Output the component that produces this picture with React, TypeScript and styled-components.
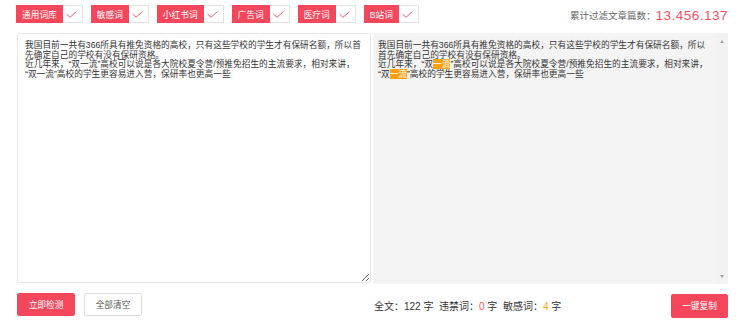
import React from "react";
import styled, { createGlobalStyle } from "styled-components";

const RED = "#f4475c";
const FONT = `"Liberation Sans", "Noto Sans CJK SC", sans-serif`;

const tags = ["通用词库", "敏感词", "小红书词", "广告词", "医疗词", "B站词"];

const sourceText =
  "我国目前一共有366所具有推免资格的高校，只有这些学校的学生才有保研名额，所以首先确定自己的学校有没有保研资格。\n" +
  "近几年来，“双一流”高校可以说是各大院校夏令营/预推免招生的主流要求，相对来讲，\n" +
  "“双一流”高校的学生更容易进入营，保研率也更高一些";

const App: React.FC = () => {
  return (
    <>
      <GlobalStyle />
      <Page>
        <TopBar>
          <TagList>
            {tags.map((t) => (
              <TagGroup key={t}>
                <TagLabel>{t}</TagLabel>
                <CheckBox>
                  <svg width="11" height="7" viewBox="0 0 11 7">
                    <polyline
                      points="0.5,3 4,6.3 10.5,0.5"
                      fill="none"
                      stroke="#f05a6b"
                      strokeWidth="1"
                    />
                  </svg>
                </CheckBox>
              </TagGroup>
            ))}
          </TagList>
          <Counter>
            <span className="label">累计过滤文章篇数：</span>
            <span className="num">13.456.137</span>
          </Counter>
        </TopBar>

        <Columns>
          <Editor defaultValue={sourceText} spellCheck={false} />
          <Result>
            <ResultText>
              我国目前一共有366所具有推免资格的高校，只有这些学校的学生才有保研名额，所以首先确定自己的学校有没有保研资格。
              <br />
              近几年来，“双<Mark>一流</Mark>”高校可以说是各大院校夏令营/预推免招生的主流要求，相对来讲，
              <br />
              “双<Mark>一流</Mark>”高校的学生更容易进入营，保研率也更高一些
            </ResultText>
            <Track>
              <Arrow $dir="up" />
              <Arrow $dir="down" />
            </Track>
          </Result>
        </Columns>

        <Columns>
          <Actions>
            <Button $primary>立即检测</Button>
            <Button>全部清空</Button>
          </Actions>
          <StatsRow>
            <Stats>
              全文：122 字&nbsp; 违禁词：<em className="bad">0</em> 字&nbsp; 敏感词：
              <em className="warn">4</em> 字
            </Stats>
            <CopyButton>一键复制</CopyButton>
          </StatsRow>
        </Columns>
      </Page>
    </>
  );
};

export default App;

/* ================= styled ================= */

const GlobalStyle = createGlobalStyle`
  html, body {
    margin: 0;
    padding: 0;
    background: #fff;
    font-family: ${FONT};
    color: #333;
  }
`;

const Page = styled.div`
  width: 744px;
  height: 326px;
  box-sizing: border-box;
  padding: 5px 16px 0 16px;
  overflow: hidden;
`;

const TopBar = styled.div`
  display: flex;
  align-items: center;
  justify-content: space-between;
  height: 18px;
`;

const TagList = styled.div`
  display: flex;
  gap: 8px;
`;

const TagGroup = styled.div`
  display: flex;
  height: 18px;
`;

const TagLabel = styled.div`
  display: flex;
  align-items: center;
  padding: 0 6px;
  background: ${RED};
  color: #fff;
  font-size: 8.7px;
`;

const CheckBox = styled.div`
  width: 20px;
  box-sizing: border-box;
  border: 1px solid #e3e3e3;
  border-left: none;
  background: #fff;
  display: flex;
  align-items: center;
  justify-content: center;
  padding-right: 1px;
`;

const Counter = styled.div`
  display: flex;
  align-items: center;
  margin-top: 2px;

  .label {
    font-size: 9.5px;
    color: #666;
  }
  .num {
    font-size: 13.5px;
    letter-spacing: 0.5px;
    color: #f5505f;
  }
`;

const Columns = styled.div`
  display: grid;
  grid-template-columns: 354px 355px;
  column-gap: 2px;
  padding-left: 1px;
  margin-top: 10px;

  & + & {
    margin-top: 9px;
  }
`;

const Editor = styled.textarea`
  width: 354px;
  height: 250px;
  box-sizing: border-box;
  border: 1px solid #e6e6e6;
  border-radius: 2px;
  padding: 7px 7px 6px;
  margin: 0;
  font-family: ${FONT};
  font-size: 8.7px;
  line-height: 9.5px;
  color: #333;
  background: #fff;
  outline: none;
  resize: both;
`;

const Result = styled.div`
  height: 251px;
  display: flex;
  background: #f4f4f4;
`;

const ResultText = styled.div`
  flex: 1;
  padding: 8px 6px 0 5px;
  font-size: 8.7px;
  line-height: 9.5px;
  color: #333;
`;

const Mark = styled.span`
  background: #ffa00e;
  color: #fff;
`;

const Track = styled.div`
  width: 12px;
  display: flex;
  flex-direction: column;
  justify-content: space-between;
  align-items: center;
  padding: 7px 0 6px;
  box-sizing: border-box;
  background: #f2f2f2;
`;

const Arrow = styled.div<{ $dir: "up" | "down" }>`
  width: 0;
  height: 0;
  border-left: 2.5px solid transparent;
  border-right: 2.5px solid transparent;
  ${(p) =>
    p.$dir === "up"
      ? "border-bottom: 3px solid #a6a6a6;"
      : "border-top: 3px solid #a6a6a6;"}
`;

const Actions = styled.div`
  display: flex;
  gap: 9px;
  align-items: flex-start;
`;

const Button = styled.button<{ $primary?: boolean }>`
  width: 58px;
  height: 23px;
  box-sizing: border-box;
  border-radius: 2px;
  border: 1px solid ${(p) => (p.$primary ? RED : "#dcdcdc")};
  background: ${(p) => (p.$primary ? RED : "#fff")};
  color: ${(p) => (p.$primary ? "#fff" : "#555")};
  font-family: ${FONT};
  font-size: 8.7px;
  padding: 0;
  cursor: pointer;
`;

const StatsRow = styled.div`
  display: flex;
  justify-content: space-between;
  align-items: center;
  padding-left: 1px;
  height: 25px;
`;

const Stats = styled.div`
  font-size: 10px;
  color: #333;

  em {
    font-style: normal;
  }
  .bad {
    color: #f55a5a;
  }
  .warn {
    color: #f7a11a;
  }
`;

const CopyButton = styled(Button).attrs({ $primary: true })`
  width: 57px;
  height: 24px;
`;
